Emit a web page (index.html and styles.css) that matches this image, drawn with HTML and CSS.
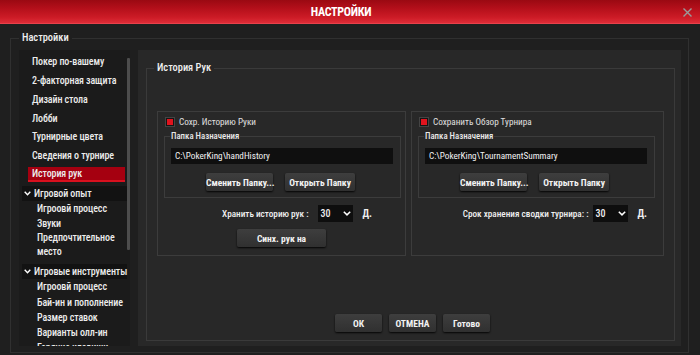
FILE: index.html
```html
<!DOCTYPE html>
<html lang="ru">
<head>
<meta charset="utf-8">
<title>Настройки</title>
<link rel="stylesheet" href="styles.css">
</head>
<body>
<div class="window">
  <header class="titlebar">
    <span class="title">НАСТРОЙКИ</span>
    <svg class="close" width="9" height="9" viewBox="0 0 9 9"><path d="M0.5 0.5L8.5 8.5M8.5 0.5L0.5 8.5" stroke="#9a9a9a" stroke-width="1.4"/></svg>
  </header>
  <fieldset class="settings">
    <legend class="settings-legend">Настройки</legend>
    <div class="settings-body">
      <nav class="sidebar">
        <ul class="menu">
          <li class="item">Покер по-вашему</li>
          <li class="item">2-факторная защита</li>
          <li class="item">Дизайн стола</li>
          <li class="item">Лобби</li>
          <li class="item">Турнирные цвета</li>
          <li class="item">Сведения о турнире</li>
          <li class="item active">История рук</li>
          <li class="group-head"><svg class="chev" width="7" height="5" viewBox="0 0 7 5"><path d="M0.7 0.8L3.5 3.8L6.3 0.8" fill="none" stroke="#fff" stroke-width="1.4"/></svg>Игровой опыт</li>
          <li class="sub">Игроовй процесс</li>
          <li class="sub">Звуки</li>
          <li class="sub wrap">Предпочтительное место</li>
          <li class="group-head second"><svg class="chev" width="7" height="5" viewBox="0 0 7 5"><path d="M0.7 0.8L3.5 3.8L6.3 0.8" fill="none" stroke="#fff" stroke-width="1.4"/></svg>Игровые инструменты</li>
          <li class="sub">Игроовй процесс</li>
          <li class="sub">Бай-ин и пополнение</li>
          <li class="sub">Размер ставок</li>
          <li class="sub">Варианты олл-ин</li>
          <li class="sub">Горячие клавиши</li>
        </ul>
        <div class="scrollbar"><div class="thumb"></div></div>
      </nav>
      <main class="panel">
        <fieldset class="history">
          <legend class="history-legend">История Рук</legend>
          <div class="history-body">
            <div class="columns">
              <section class="box box-left">
                <label class="check"><span class="checkbox"><span class="tick"></span></span>Сохр. Историю Руки</label>
                <fieldset class="folder">
                  <legend class="folder-legend">Папка Назначения</legend>
                  <div class="folder-body">
                    <div class="path">C:\PokerKing\handHistory</div>
                    <div class="folder-buttons">
                      <button class="btn btn-change">Сменить Папку...</button>
                      <button class="btn btn-open">Открыть Папку</button>
                    </div>
                  </div>
                </fieldset>
                <div class="keep keep-left">
                  <span class="keep-label">Хранить историю рук :</span>
                  <span class="select">30<svg width="8" height="5" viewBox="0 0 8 5"><path d="M0.8 0.8L4 3.9L7.2 0.8" fill="none" stroke="#fff" stroke-width="1.5"/></svg></span>
                  <span class="unit">Д.</span>
                </div>
                <div class="sync-row"><button class="btn btn-sync">Синх. рук на</button></div>
              </section>
              <section class="box box-right">
                <label class="check"><span class="checkbox"><span class="tick"></span></span>Сохранить Обзор Турнира</label>
                <fieldset class="folder">
                  <legend class="folder-legend">Папка Назначения</legend>
                  <div class="folder-body">
                    <div class="path">C:\PokerKing\TournamentSummary</div>
                    <div class="folder-buttons">
                      <button class="btn btn-change">Сменить Папку...</button>
                      <button class="btn btn-open">Открыть Папку</button>
                    </div>
                  </div>
                </fieldset>
                <div class="keep keep-right">
                  <span class="keep-label">Срок хранения сводки турнира: :</span>
                  <span class="select">30<svg width="8" height="5" viewBox="0 0 8 5"><path d="M0.8 0.8L4 3.9L7.2 0.8" fill="none" stroke="#fff" stroke-width="1.5"/></svg></span>
                  <span class="unit">Д.</span>
                </div>
              </section>
            </div>
            <div class="actions">
              <button class="btn btn-action">ОК</button>
              <button class="btn btn-action">ОТМЕНА</button>
              <button class="btn btn-action">Готово</button>
            </div>
          </div>
        </fieldset>
      </main>
    </div>
  </fieldset>
</div>
</body>
</html>
```
FILE: styles.css
```css
* { box-sizing: border-box; }
html, body { margin: 0; padding: 0; }
body {
  width: 700px;
  height: 355px;
  overflow: hidden;
  background: #1f1f1f;
  font-family: "Roboto Condensed", "Liberation Sans Narrow", Roboto, sans-serif;
  font-stretch: condensed;
  color: #e6e6e6;
}
.window { display: flex; flex-direction: column; height: 355px; }

.titlebar {
  height: 24px;
  flex: none;
  display: flex;
  align-items: center;
  justify-content: center;
  position: relative;
  padding-right: 18px;
  background: linear-gradient(#9a0912 0, #b30f1a 35%, #cc1b26 75%, #de2c37 100%);
  border-bottom: 1px solid #e8414b;
}
.title {
  color: #fff;
  font-weight: 700;
  font-size: 12px;
  letter-spacing: -0.3px;
}
.close { position: absolute; right: 8px; top: 8px; }

fieldset { min-width: 0; margin: 0; padding: 0; }

.settings {
  margin: 8px 11px 0 10px;
  border: 1px solid #303030;
  height: 321px;
}
.settings-legend {
  font-size: 10.4px;
  line-height: 12px;
  font-weight: 500;
  color: #f0f0f0;
  padding: 0 3px;
  margin-left: 8px;
}
.settings-body {
  display: flex;
  gap: 8px;
  padding: 6px 7px 0 8px;
}

.sidebar {
  width: 111px;
  height: 296px;
  flex: none;
  background: #1b1b1b;
  display: flex;
  overflow: hidden;
}
.menu {
  list-style: none;
  margin: 0;
  padding: 4.2px 0 0 0;
  flex: 1;
  font-size: 10px;
  font-weight: 500;
  letter-spacing: -0.1px;
  color: #ececec;
}
.item {
  height: 15px;
  line-height: 15px;
  margin: 0 2px 3.8px 9px;
  padding-left: 4px;
  white-space: nowrap;
}
.item.active {
  background: #a50010;
  border-bottom: 2px solid #d8101e;
  line-height: 14px;
  margin-bottom: 4px;
}
.group-head {
  height: 15px;
  line-height: 15px;
  margin-left: 3px;
  background: #121212;
  display: flex;
  align-items: center;
  gap: 1px;
  white-space: nowrap;
}
.group-head.second { margin-top: 5px; }
.chev { margin: 0 2px 0 2px; }
.sub {
  line-height: 15.2px;
  padding-left: 18px;
  white-space: nowrap;
}
.sub.wrap { white-space: normal; line-height: 14px; width: 90px; }
.scrollbar {
  width: 3px;
  flex: none;
  margin-right: 1px;
  padding-top: 8px;
}
.thumb { height: 192px; background: #4d4d4d; border-radius: 1px; }

.panel {
  flex: 1;
  height: 296px;
  background: #282828;
  padding: 12px 6px 5px 8px;
  display: block;
}
.history {
  height: 279px;
  border: 1px solid #3a3a3a;
}
.history-legend {
  font-size: 10.4px;
  line-height: 12px;
  font-weight: 500;
  color: #f0f0f0;
  padding: 0 3px;
  margin-left: 7px;
}
.history-body { padding: 37px 10px 0 10px; }
.columns {
  display: grid;
  grid-template-columns: 249px 253px;
  gap: 5px;
}
.box {
  border: 1px solid #3c3c3c;
  height: 145px;
  padding: 4px 0 0 6px;
}
.check {
  display: flex;
  align-items: center;
  gap: 4px;
  font-size: 9.2px;
  color: #e0e0e0;
  height: 11px;
  margin-left: 1px;
}
.checkbox {
  width: 10px;
  height: 10px;
  background: #151515;
  border: 1px solid #444;
  display: flex;
  align-items: center;
  justify-content: center;
}
.tick { width: 6px; height: 6px; background: #e0141e; }

.folder {
  margin: 4px 0 0 0;
  width: 237px;
  height: 67px;
  border: 1px solid #3c3c3c;
}
.folder-legend {
  font-size: 8.8px;
  line-height: 11px;
  font-weight: 500;
  color: #e8e8e8;
  padding: 0 1px;
  margin-left: 5px;
}
.folder-body { padding: 6px 6px 0 6px; }
.path {
  height: 16px;
  width: 222px;
  background: #0f0f0f;
  font-size: 9.2px;
  line-height: 16px;
  padding-left: 4px;
  color: #f2f2f2;
}
.folder-buttons {
  display: flex;
  justify-content: center;
  gap: 12px;
  margin-top: 9px;
  padding-right: 4px;
}
.btn {
  font-family: "Roboto Condensed", "Liberation Sans Narrow", Roboto, sans-serif;
  font-stretch: condensed;
  font-weight: 700;
  font-size: 9.5px;
  color: #f2f2f2;
  background: linear-gradient(#3e3e3e, #303030);
  border: none;
  border-radius: 2px;
  box-shadow: 0 1px 2px rgba(0,0,0,0.9);
  height: 18px;
  padding: 0;
  white-space: nowrap;
}
.btn-change { width: 67px; }
.btn-open { width: 70px; }
.keep {
  display: flex;
  align-items: center;
  justify-content: flex-end;
  height: 17px;
  margin-top: 7px;
  font-size: 9.2px;
  font-weight: 500;
  color: #f0f0f0;
}
.keep-left { padding-right: 33px; }
.keep-right { padding-right: 16px; }
.select {
  width: 35px;
  height: 17px;
  background: #0e0e0e;
  display: flex;
  align-items: center;
  justify-content: space-between;
  padding: 0 2px 0 3px;
  font-weight: 500;
  font-size: 10px;
}
.keep-left .select { margin-left: 9px; }
.keep-right .select { margin-left: 4px; }
.unit { margin-left: 10px; font-weight: 700; font-size: 10px; }
.sync-row { display: flex; justify-content: center; margin-top: 7px; padding-right: 6px; }
.btn-sync { width: 89px; }

.actions {
  display: flex;
  justify-content: center;
  gap: 7px;
  margin-top: 58px;
  padding-left: 4px;
}
.btn-action { width: 47px; }
```
